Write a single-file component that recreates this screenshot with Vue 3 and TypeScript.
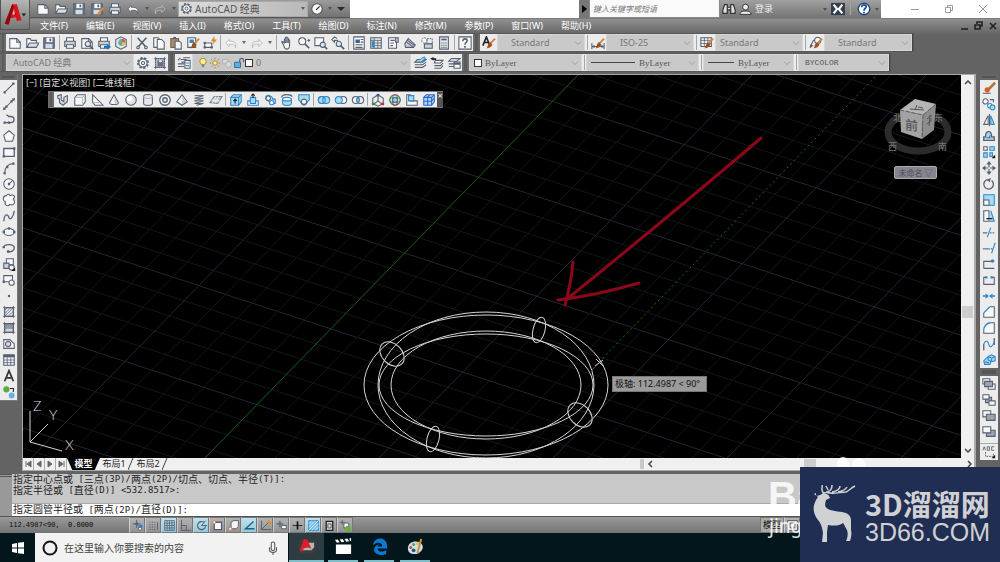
<script setup lang="ts">
type Shape = { d: string; fill: string; stroke: string; w: number; dash?: string }
type Item =
  | { kind: 'icon'; icon: string; label: string }
  | { kind: 'sep' | 'caret' | 'grip' }
  | { kind: 'combo'; label: string; text: string; size: string; prefix?: string }

const ink = '#566070'
const blue = '#2f86c9'
const pale = '#a8daf3'
const paper = '#f7f8fa'
const orange = '#df8a2b'
const grey = '#b4b8bf'

const s = (d: string, stroke = ink, fill = 'none', w = 1.2, dash?: string): Shape => ({ d, fill, stroke, w, dash })
const f = (d: string, fill = ink): Shape => ({ d, fill, stroke: 'none', w: 0 })
const circ = (x: number, y: number, r: number) => `M${x - r} ${y}a${r} ${r} 0 1 0 ${2 * r} 0a${r} ${r} 0 1 0 ${-2 * r} 0z`
const oval = (x: number, y: number, a: number, b: number) => `M${x - a} ${y}a${a} ${b} 0 1 0 ${2 * a} 0a${a} ${b} 0 1 0 ${-2 * a} 0z`
const box = (x: number, y: number, w: number, h: number) => `M${x} ${y}h${w}v${h}h${-w}z`
const dots = (pts: number[][], color = ink) => pts.map(([x, y]) => f(box(x - 1.3, y - 1.3, 2.6, 2.6), color))
const brush = [s('M15 3 9 9', '#c98b46', 'none', 2.4), f('M9 7l3 3c-2 3-4 4-7 4 2-1 1-5 4-7z', '#9c4f1f')]
const printer = [s('M4 6V2h8v4', ink, paper), s('M2 6h12v6H2z', ink, '#c9ced6'), s('M4 10h8v4H4z', ink, paper)]
const floppy = [s('M2 2h12v12H2z', ink, '#66758d'), f(box(5, 2, 7, 5), paper), f(box(4, 9, 8, 5), '#d5dae1'), f(box(8.5, 3, 2, 3))]
const page = [s('M2 3h8l4 4v7H2z', ink, paper), s('M10 3v4h4')]
const folder = [s('M2 13V3h4l1 2h6v3', ink, paper), s('M2 13l3-5h11l-3 5z', ink, '#d8dde4')]
const gear = [s(circ(8, 8, 5.5), ink, 'none', 2.5, '2.5 1.8'), s(circ(8, 8, 4.7), ink, paper), s(circ(8, 8, 1.8))]
const sheets = [s('M5 4l10 0-4 3H2z', ink, pale), s('M2 10h9l4-3', ink), s('M2 13h9l4-3', ink)]

const icons: Record<string, Shape[]> = {
  new: page,
  open: folder,
  save: floppy,
  saveas: [...floppy, s('M15 7l-6 7', orange, 'none', 2.4)],
  print: printer,
  preview: [...page, s(circ(9, 9, 3), ink, '#dbe8f2'), s('M11 11l4 4', ink, 'none', 2)],
  publish: [...printer, f('M8 11h4V9l4 3.500-4 3.500v-2H8z', '#1776c4')],
  globe: [s('M8 1l6 3v8l-6 3-6-3V4z', ink, '#dce9f5'), f(circ(9, 7, 4), '#6aa7dd'), f('M9 3a4 4 0 0 1 4 4H9z', '#e05a45'), f('M9 7h4a4 4 0 0 1-4 4z', '#edc13f'), f('M9 7v4a4 4 0 0 1-4-4z', '#6db258')],
  cut: [s('M3 2l9 10M13 2L4 12', ink, 'none', 1.8), s(circ(3.5, 13, 1.5)), s(circ(12.5, 13, 1.5))],
  copy: [s('M2 2h5l3 3v8H2z', ink, paper), s('M6 4h5l3 3v8H6z', ink, paper)],
  paste: [s('M2 3h9v10H2z', '#7b654f', '#a9896b'), s('M7 6h5l2 2v7H7z', ink, paper), s('M5 2h3', ink, 'none', 2)],
  match: [s(box(2, 2, 9, 11), ink, paper), f(box(4, 4, 5, 4), blue), ...brush],
  block: [s('M2 8h8v5H2z', ink, paper), ...dots([[2, 13], [10, 13], [2, 8]]), f('M13 0l-4 6h3l-1 4 5-6h-3z', orange)],
  undo: [s('M6 4L2 8l4 4V9.500h4c2 0 3 1 3 4 2-6-1-7.500-7-7.500z', ink, paper, 1)],
  undoDim: [s('M6 4L2 8l4 4V9.500h4c2 0 3 1 3 4 2-6-1-7.500-7-7.500z', grey, paper, 1)],
  redoDim: [s('M10 4l4 4-4 4V9.500H6c-2 0-3 1-3 4-2-6 1-7.500 7-7.500z', grey, 'none', 1)],
  pan: [s('M4 10L2 7c0-1 1-1 3 1V4c0-1 1.500-1 1.500 0V2c0-1 1.500-1 1.500 0v1c0-1 1.500-1 1.500 0v2c0-1 1.500-1 1.500 0v5c0 3-1 5-3.500 5S5 13 4 10z', ink, paper), s('M6.500 4v4M8 3v5M9.500 4v4')],
  zoomrt: [s(circ(6, 6, 4), ink, paper), s('M9 9l5 5', ink, 'none', 2), s('M12 5h3M13.500 3.500v3')],
  zoomwin: [s(box(1, 2, 10, 9), ink, paper), s(circ(10, 10, 3), ink, '#dbe8f2'), s('M12 12l3 3', ink, 'none', 2)],
  zoomprev: [s('M7 3L4 1 1 4l3 3V5h4', ink, paper), s(circ(9, 9, 3), ink, '#dbe8f2'), s('M11 11l4 4', ink, 'none', 2)],
  props: [s(box(2, 1, 12, 14), ink, paper), f(box(4, 4, 5, 4), '#2e67a8'), s('M10 4h3M10 7h3M4 10h8M4 13h8')],
  center: [s(box(2, 2, 12, 12), ink, '#e7ebf0'), s('M2 5h12M6 2v12M10 5v9M6 8h8M6 11h8', ink, 'none', 0.9), f(box(3, 6, 3, 7), blue)],
  palette: [s(box(3, 2, 9, 12), ink, paper), s('M5 5h5M5 8h4M5 11h3'), s(box(11, 2, 3, 5), ink, '#ccd2da')],
  sheetset: [s('M2 9l4-6 8 7-2 3-9 0z', ink, '#cdd2d9'), s('M4 7l8 6M5 5l8 6')],
  markup: [s(circ(5, 5, 3), ink, paper, 1, '2 1'), s('M8 3h6v6H8z', ink, 'none', 1, '2 1'), s(box(5, 9, 9, 5), ink, '#ccd2da')],
  calc: [s(box(3, 1, 10, 14), ink, '#e6e8ec'), f(box(5, 3, 6, 2)), s('M5 8h6M5 10.500h6M5 13h6', ink, 'none', 1.2, '1.300 1')],
  help: [s(box(1, 1, 14, 14), ink, paper), s('M5.500 6c0-4 5-3 5-.500C10.500 7 8 7.500 8 10', ink, 'none', 1.8), f(box(7, 11.500, 2, 2))],
  textstyle: [s('M1 11L5 1l4 10M2.500 7.500h5', '#222', 'none', 1.8), ...brush],
  dimstyle: [s('M1 8v7M15 8v7M1 12h14'), f('M1 12l3-2v4z'), f('M15 12l-3-2v4z'), ...brush],
  tablestyle: [s(box(1, 2, 12, 10), ink, paper), s('M1 5h12M5 2v10M9 2v10M1 8.500h12', ink, 'none', 0.9), ...brush],
  mleader: [s('M1 13L5 5h3', ink), f('M1 14l1-5 3 2z'), s(circ(10, 5, 3.5), ink, paper), ...brush],
  gear,
  wssave: [s(box(3, 3, 10, 10), ink, '#c5cdd8', 1.2, '1.500 1'), f(box(5, 5, 7, 7), '#64707f'), f(box(7, 5, 3, 2), paper), s('M1 3h14M3 1v14M13 1v14M1 13h14', ink, 'none', 0.9)],
  layerprop: [s('M7 2h8M4 4h7M5 7h5M1 9h8M1 12h7M4 2L1 5'), s(box(9, 5, 6, 9), ink, paper), s('M10 8h4M10 11h4', blue)],
  bulb: [s(circ(8, 6, 4.3), '#a8862b', '#ffec91'), s('M6 11h4M6.500 13h3', '#73736e', 'none', 1.5)],
  sun: [s(circ(8, 8, 3), '#a88625', '#ffec91'), s('M8 1v2M8 13v2M1 8h2M13 8h2M3 3l1.500 1.500M13 3l-1.500 1.500M3 13l1.500-1.500M13 13l-1.500-1.500', '#a88625')],
  freeze: [s(box(2, 3, 7, 6), '#adadad', '#d8d8d8'), s(circ(10, 10, 4), '#adadad', '#d8d8d8')],
  lock: [s(box(2, 7, 8, 7), '#276a9e', '#56b3e6'), s('M9 7V4c0-3 5-3 5 0v3', ink, 'none', 1.6)],
  layermake: [...sheets, s('M9 3l4-2 1 2-6 5', blue, pale)],
  layerprev: [s('M6 5h9l-3 3H5z', ink, paper), s('M5 11h7l3-3'), s('M5 14h7l3-3'), f('M0 3l4-2v1.500h3v2H4V5z', '#222')],
  layerstate: [s('M5 3h10l-4 3H2z', ink, paper), s('M2 9h7M2 12h6'), s(box(8, 7, 7, 7), ink, paper), s('M8 9h7', ink, 'none', 2)],
  line: [s('M3 13L13 3'), ...dots([[3, 13], [13, 3]])],
  xline: [s('M2 14L14 2'), ...dots([[5, 11], [11, 5]]), f('M15 1l-1 4-3-3z'), f('M1 15l1-4 3 3z')],
  pline: [s('M7 4h3c5 0 5 7 0 7H3M5 2l3 2', ink, 'none', 1.5), ...dots([[3, 11], [8, 11]])],
  polygon: [s('M8 2l6 5-2 7H4L2 7z', ink, paper)],
  rect: [s(box(2, 4, 12, 9), ink, paper, 1.5), ...dots([[2, 13], [14, 4]])],
  arc: [s('M3 14C3 7 7 3 13 3'), ...dots([[3, 14], [6, 7], [13, 3]])],
  circle: [s(circ(8, 8, 6), ink, paper), s('M8 8l4-4'), ...dots([[8, 8]])],
  cloud: [s('M5 3c2-3 4-1 4 0 4-2 7 1 4 4 3 4 0 8-4 6-2 3-7 1-5-3-4-1-3-7 1-7z', ink, paper)],
  spline: [s('M2 14C3 3 7 7 8 10s5 0 6-8', ink, 'none', 1.5)],
  ellipse: [s(oval(8, 8, 6, 4), ink, paper), ...dots([[2, 8], [14, 8], [8, 4]])],
  earc: [s('M2 7c1-4 12-4 12 1 0 3-4 5-7 4', ink, 'none', 1.5), ...dots([[2, 7], [7, 12]])],
  insert: [s(box(5, 2, 8, 7), ink, paper), s('M2 7h6v6H2z', ink, '#ccd2da'), s(circ(11, 12, 3), ink, paper), f('M15 12v4h-4z', '#111')],
  mkblock: [s(box(2, 3, 10, 7), ink, paper), s(circ(11, 11, 3), ink, paper), ...dots([[2, 10]])],
  point: [f(circ(8, 8, 1.4))],
  hatch: [s(box(3, 3, 10, 10), ink, '#dcdfe3'), s('M3 6l3-3M3 10l7-7M3 13L13 3M7 13l6-6M11 13l2-2', ink, 'none', 0.7), s('M1 3h14M3 1v14M13 1v14M1 13h14', ink, 'none', 0.9)],
  gradient: [s(box(3, 3, 10, 10), ink, '#8f97a2'), f(box(4, 9, 8, 3), '#d2d6dc'), s('M1 3h14M3 1v14M13 1v14M1 13h14', ink, 'none', 0.9)],
  region: [s('M2 3h7l5 5v5H2z', ink, paper), s(circ(7, 8, 3), ink, '#d8dce2')],
  table: [s(box(2, 2, 12, 12), ink, paper), f(box(2, 2, 12, 3)), s('M2 8h12M2 11h12M6 5v9M10 5v9', ink, 'none', 0.9)],
  mtext: [s('M3 14L8 2l5 12M5 10h6', '#333', 'none', 2)],
  addsel: [f(circ(5, 5, 3.5), '#5fa843'), f(circ(11, 12, 3.3), '#62b1e6'), s('M9 4h4v4', '#222')],
  erase: [s('M15 2L7 10', '#a97a42', 'none', 3), f(circ(6, 10, 3), '#dd5b22'), s('M1 14h9')],
  mcopy: [s(circ(4, 5, 3), ink, paper), s(circ(9, 10, 2.6), blue, paper), s(circ(12, 12, 2.8), blue, pale), s('M9 3h4v3')],
  mirror: [s('M7 3v10H2z', ink, paper), s('M10 3v10h4z', blue, pale), s('M8.500 1v14')],
  offset: [s('M2 13h12V9h-3c0-8-7-8-7 0H2z', ink, pale, 1.5), s('M5 10h4V7', ink)],
  array: [s(box(2, 2, 4, 4), ink, paper), s(box(9, 2, 5, 4), blue, pale), s(box(2, 9, 4, 5), blue, pale), s(box(9, 9, 3, 4), blue, pale), f('M15 11v4h-4z', '#111')],
  move: [s('M8 2v12M2 8h12', ink, 'none', 1.4), f('M8 0l3 4H5z'), f('M8 16l3-4H5z'), f('M0 8l4-3v6z'), f('M16 8l-4-3v6z'), f(box(7, 7, 2, 2), paper)],
  rotate: [s('M6 3a5.500 5.500 0 1 0 5 1', ink, 'none', 1.5), f('M10 1L5 3l4 3z')],
  scale: [s(box(2, 2, 12, 12), blue, pale), s(box(2, 8, 6, 6), ink, paper)],
  stretch: [s('M2 2h6v12H2z', ink, paper), s('M10 2l4 12H8', blue, pale), s('M5 11h7', '#222', 'none', 1.5)],
  trim: [s('M1 9h5', ink, 'none', 1.3), s('M9 9h6', blue, 'none', 1.3, '2 1'), s('M10 3L6 14', blue)],
  extend: [s('M1 9h6', ink), s('M7 9h5', blue, 'none', 1.3, '2 1'), s('M15 2l-4 12', blue)],
  breakpt: [s('M2 13V5h12M2 13h12'), f(circ(12, 4.5, 2), blue)],
  breakg: [s('M5 5H2v8h12V5h-3'), ...dots([[5, 5], [11, 5]], blue)],
  join: [s('M1 8h5M10 8h5', blue, 'none', 1.5), f('M8 8L4 5v6z', blue), f('M8 8l4-3v6z', blue)],
  chamfer: [s('M2 9v5h12V2H9', ink, paper), s('M2 9l7-7', blue, 'none', 1.5)],
  fillet: [s('M2 10v4h12V2h-4', ink, paper), s('M2 10c0-4 4-8 8-8', blue, 'none', 1.5)],
  blend: [s('M2 15V8M14 1v8', ink, 'none', 1.5), s('M2 8C5 2 7 5 8 9s4 2 6-3', blue, 'none', 1.3)],
  explode: [s('M2 9l4-4 5 2-2 6H3z', blue, pale), s('M7 4l4-2 4 2v5l-4 1-4-2z', blue, pale), s('M7 4l4 2 4-2M11 6v4M3 10l5 1', blue)],
  front: [s(box(1, 2, 8, 6), ink, paper), s(box(7, 8, 8, 6), ink, paper), s(box(3, 5, 9, 6), ink, '#9ba3af')],
  back: [s(box(4, 5, 7, 6), ink, '#9ba3af'), s(box(1, 2, 7, 5), ink, paper), s(box(8, 9, 7, 5), ink, paper)],
  above: [s(box(1, 2, 9, 7), ink, paper), s(box(5, 6, 10, 7), ink, '#9ba3af')],
  under: [s(box(5, 6, 10, 7), ink, '#9ba3af'), s(box(1, 2, 9, 7), ink, paper)],
  abc: [s('M1 6l1.500-4L4 6M6 2v4h2.500V2zM14 2h-3v4h3', ink, 'none', 1), s('M4 8v5h9V9', ink, 'none', 1, '2 1'), f('M15 11v4h-4z', '#111')],
  polysolid: [s('M2 3l4-1v6l3 2V5l4-2v7l-5 4-4-3V7L2 6z', ink, '#d4d9e0')],
  box: [s('M2 5l3-3h9v8l-3 4H2z', ink, paper), s('M2 5h9v9M11 5l3-3', grey)],
  wedge: [s('M3 2v9l3 3h9z', ink, paper), s('M3 11h8', grey)],
  cone: [s('M8 2l5 9c0 3-10 3-10 0z', ink, paper), f('M8 3l4 8-3 2z', '#c9ced6')],
  sphere: [s(circ(8, 8, 6), ink, '#dfe3e8'), f(circ(6.5, 6.5, 3), '#fff')],
  cylinder: [s('M3 4v8c0 3 10 3 10 0V4c0-3-10-3-10 0z', ink, '#e4e7eb'), s('M3 4c0 3 10 3 10 0', grey)],
  torus: [s(circ(8, 8, 6), ink, paper, 1.5), s(circ(8, 8, 2.6), ink, '#ececec', 1.5)],
  pyramid: [s('M8 2l6 8-6 4-6-4z', ink, paper), f('M8 3l5 7-5 3z', '#cdd2d9')],
  helix: [s('M3 3h10L3 6h10L3 9h10L3 12h10l-8 2', ink, 'none', 1.1)],
  planar: [s('M1 11l5-7h9l-5 8z', '#7b8491', '#bcc2ca'), s('M3 8l9 1M8 4l-4 7M11 4l-4 7', '#eee')],
  extrude: [s('M2 5l3-3h9v8l-3 4H2z', blue, pale), s('M2 5h9v9M11 5l3-3', blue), s('M7 12V7M5 9l2-2 2 2', '#1c3048', 'none', 1.5)],
  presspull: [s('M2 14V9h12v5z', blue, paper), s('M5 5h6v7H5z', blue, pale), s('M8 6V1M6 3l2-2 2 2', '#222')],
  sweep: [s('M3 6c0-6 8-3 8 1h3v5H8c0-4-5-2-5-6z', blue, pale), s(circ(6, 6, 2.5), ink, paper), s(circ(10, 11, 2.5), blue, paper)],
  revolve: [s('M3 7v5c0 3 10 3 10 0V7z', blue, pale), s('M2 5c0-4 10-4 12-1', ink, 'none', 1.4), s(oval(8, 7, 5, 2), blue, paper)],
  loft: [s('M2 2h12v6c-3 1-2 6-6 6S5 9 2 8z', blue, pale), s(circ(8, 10, 3), ink, paper)],
  union: [s(circ(5.5, 8, 4), blue, pale), s(circ(10.5, 8, 4), blue, pale), s(circ(5.5, 8, 4), blue)],
  subtract: [s(circ(10.5, 8, 4), ink, paper), s(circ(5.5, 8, 4), blue, pale)],
  intersect: [s(circ(5.5, 8, 4), ink, paper), s(circ(10.5, 8, 4), ink, 'none'), s('M8 5c2 2 2 4 0 6-2-2-2-4 0-6z', blue, pale)],
  move3d: [s('M8 2v7M8 9l-5 4M8 9l5 4', ink, 'none', 1.3), s('M8 2L2 6v6l6 3 6-3V6z', ink), f(box(6.5, 1, 3, 3), '#335c9c'), f(box(1, 11, 3, 3), '#338c38'), f(box(12, 11, 3, 3), '#b93434')],
  rotate3d: [s(circ(8, 8, 6), ink, paper), s(oval(8, 8, 3, 6), '#c0392b'), s(oval(8, 8, 6, 3), '#3c9a4b'), s(circ(8, 8, 2.5), blue, pale)],
  align3d: [s('M2 2v12h12V9H6V2z', ink, paper), s(box(4, 3, 6, 6), blue, pale)],
  array3d: [s('M2 5l3-3h9v8l-3 4H2z', '#2f63c9', pale), s('M2 5h9v9M11 5l3-3M6.500 5v9M2 9.500h9M6 5l3-3M11 9l3-3', '#2f63c9')],
  infer: [s('M7 1v10M2 6h10'), f(box(9, 7, 5, 5), blue), s(circ(11, 12, 2), ink, paper), f(circ(7, 6, 2))],
  snap: [s('M3 4h9M3 7h9M3 10h9M3 13h9', ink, 'none', 1.3, '1.300 1.700'), s('M13 4v9')],
  grid: [s('M2 2h12v12H2zM5 2v12M8 2v12M11 2v12M2 5h12M2 8h12M2 11h12', ink, 'none', 1)],
  ortho: [s('M3 1v13h12M3 8h6v6', ink, 'none', 1.2)],
  polar: [s('M13 9a5 5 0 1 1-2-5', ink, 'none', 1.4), s('M8 8h7M8 8l5-6')],
  osnap: [s(box(4, 4, 9, 9), ink, paper, 1.6), s(circ(4, 4, 1.8), '#d97841', '#fff')],
  osnap3: [s('M5 4l3-2h6v7l-3 3H5z', ink, paper), s(circ(4, 12, 2), '#d97841', '#fff')],
  otrack: [s('M13 3L3 12h11', '#245b78', 'none', 1.6)],
  ducs: [s('M3 2v11h12M3 13L12 4'), f('M13 0l-4 5h3v4l4-5h-3z', orange)],
  dyn: [s('M6 2v8M2 6h8', ink, 'none', 1.5), s(box(8, 8, 6, 4), ink, paper)],
  lwt: [s('M2 8h12', '#111', 'none', 1), s('M8 3v10', '#111', 'none', 2)],
  tpy: [s(box(2, 2, 12, 12), '#4a84bf', '#78bce8'), s('M2 6l4-4M2 10l8-8M2 14L14 2M6 14l8-8M10 14l4-4', '#eaf6ff', 'none', 1)],
  qp: [s(box(4, 3, 8, 11), '#222', '#ddd', 1.6), s('M6 6h4v5H6z')],
  cycle: [s('M4 1v6M1 4h6'), s(box(6, 5, 6, 6), ink, paper), f(circ(11, 12, 3.8), '#6dad3e')],
  binoc: [s('M3 3h3v10H1V9zM13 3h-3v10h5V9zM6 6h4v3H6z', '#333', '#e4e4e4', 1.4)],
  user: [s(circ(8, 5, 3.6), '#333', '#eee'), s('M1 14c1-4 4-4 7-4s6 0 7 4z', '#333', '#eee')],
  exchange: [f(box(0, 1, 16, 14), '#333f50'), s('M3 3l4 5-4 5M13 3L9 8l4 5', '#fff', 'none', 2.4)],
  info: [s(circ(8, 8, 6.6), '#234e86', '#fff', 1.6), s('M5.500 6c0-4 5-3 5-.500C10.500 7 8 7.500 8 10', '#205397', 'none', 2), f(box(7, 11, 2, 2), '#205397')],
  gauge: [s(circ(8, 8, 6), '#555', '#fafafa', 1.3), s('M7 9l4-4', '#333', 'none', 1.6)],
}

const list = (spec: string): Item[] =>
  spec.split(' ').map((k): Item => {
    if (k === '|') return { kind: 'sep' }
    if (k === 'v') return { kind: 'caret' }
    if (k === '#') return { kind: 'grip' }
    return { kind: 'icon', icon: k, label: k }
  })
const combo = (label: string, text: string, size: string, prefix?: string): Item => ({ kind: 'combo', label, text, size, prefix })

const quick = list('new open save saveas print undo v redoDim v')
const standardBar: Item[] = [
  ...list('# new open save | print preview publish globe | cut copy paste match block | undoDim v redoDim v | pan zoomrt zoomwin zoomprev | props center palette sheetset markup calc | help # textstyle'),
  combo('文字样式', 'Standard', 'mid indent'), ...list('| dimstyle'),
  combo('标注样式', 'ISO-25', 'mid indent'), ...list('| tablestyle'),
  combo('表格样式', 'Standard', 'mid'), ...list('| mleader'),
  combo('多重引线样式', 'Standard', 'mid indent'),
]
const layerBar: Item[] = [
  ...list('#'), combo('工作空间', 'AutoCAD 经典', 'workspace'), ...list('gear wssave # layerprop'),
  combo('图层', '0', 'layer', 'layer'), ...list('layermake layerprev layerstate #'),
  combo('颜色', 'ByLayer', 'color serif', 'swatch'), ...list('|'),
  combo('线型', 'ByLayer', 'color serif', 'line'), ...list('|'),
  combo('线宽', 'ByLayer', 'weight serif', 'short'), ...list('|'),
  combo('打印样式', 'BYCOLOR', 'weight mono'),
]
const drawBar = 'line xline pline polygon rect arc circle cloud spline ellipse earc insert mkblock point hatch gradient region table mtext addsel'.split(' ')
const modifyBar = 'erase mcopy mirror offset array move rotate scale stretch trim extend breakpt breakg join chamfer fillet blend explode'.split(' ')
const orderBar = 'front back above under'.split(' ')
const modelBar = list('polysolid box wedge cone sphere cylinder torus pyramid helix planar | extrude presspull sweep revolve loft | union subtract intersect | move3d rotate3d align3d array3d')
const menus = ['文件(F)', '编辑(E)', '视图(V)', '插入(I)', '格式(O)', '工具(T)', '绘图(D)', '标注(N)', '修改(M)', '参数(P)', '窗口(W)', '帮助(H)']
const status = 'infer snap grid ortho polar osnap osnap3 otrack ducs dyn lwt tpy qp cycle'.split(' ')
const active = new Set(['grid', 'polar', 'otrack', 'tpy'])

const split = (t: string) => (t.match(/[\x20-\x7e]+|[^\x20-\x7e]+/g) ?? []).map((v) => ({ v, latin: v.charCodeAt(0) < 127 }))
const history = ['指定中心点或 [三点(3P)/两点(2P)/切点、切点、半径(T)]:', '指定半径或 [直径(D)] <532.8517>:'].map(split)
const prompt = split('指定圆管半径或 [两点(2P)/直径(D)]:')

const gridA = Array.from({ length: 44 }, (_, i) => i - 22).map((i) => ({ major: i % 5 === 0, d: `M23 ${128 + i * 20}L963 ${128 + i * 20 + 308}` }))
const gridB = Array.from({ length: 42 }, (_, i) => i - 15).map((i) => {
  const x = Math.round(578 + i * 34.8)
  return { major: i % 5 === 0, axis: i === 0, d: `M${x} 75L${x - 374} 459` }
})
</script>

<template>
  <div class="app">
    <header class="header">
      <button class="logo" aria-label="应用程序菜单">
        <svg viewBox="0 0 30 29">
          <path d="M4 24 12 3h5l5 17-5 1-1-4-6 1-1 6z" fill="#d8131c" />
          <path d="M4 24 12 3l2 2-6 20zM12 14l2-5 2 5z" fill="#8d0910" />
          <path d="M12 14l2-6 1 6z" fill="#f4b9b6" />
          <path d="M22 13h5l-2.500 3z" fill="#222" />
        </svg>
      </button>
      <div class="header-rows">
        <div class="title">
          <div class="quick">
            <template v-for="(t, i) in quick" :key="i">
              <button v-if="t.kind === 'icon'" class="tool wide" :aria-label="t.label">
                <svg viewBox="0 0 16 16"><path v-for="(p, j) in icons[t.icon]" :key="j" :d="p.d" :fill="p.fill" :stroke="p.stroke" :stroke-width="p.w" :stroke-dasharray="p.dash" /></svg>
              </button>
              <span v-else class="caret"></span>
            </template>
            <div class="space-select">
              <svg class="ico" viewBox="0 0 16 16"><path v-for="(p, j) in gear" :key="j" :d="p.d" :fill="p.fill" :stroke="p.stroke" :stroke-width="p.w" :stroke-dasharray="p.dash" /></svg>
              <select aria-label="工作空间切换"><option>AutoCAD 经典</option></select>
              <span class="caret"></span>
            </div>
            <button class="tool" aria-label="导航">
              <svg viewBox="0 0 16 16"><path v-for="(p, j) in icons.gauge" :key="j" :d="p.d" :fill="p.fill" :stroke="p.stroke" :stroke-width="p.w" /></svg>
            </button>
            <span class="caret"></span>
            <span class="caret strong"></span>
          </div>
          <div class="blank"></div>
          <button class="search-toggle" aria-label="展开搜索"><svg viewBox="0 0 10 10"><path d="M3 1v8l5-4z" /></svg></button>
          <input class="search" type="text" aria-label="搜索" placeholder="键入关键字或短语" />
          <div class="account">
            <button class="tool" aria-label="搜索"><svg viewBox="0 0 16 16"><path v-for="(p, j) in icons.binoc" :key="j" :d="p.d" :fill="p.fill" :stroke="p.stroke" :stroke-width="p.w" /></svg></button>
            <button class="login"><svg class="ico" viewBox="0 0 16 16"><path v-for="(p, j) in icons.user" :key="j" :d="p.d" :fill="p.fill" :stroke="p.stroke" :stroke-width="p.w" /></svg>登录</button>
            <span class="caret"></span>
            <button class="tool" aria-label="Exchange"><svg viewBox="0 0 16 16"><path v-for="(p, j) in icons.exchange" :key="j" :d="p.d" :fill="p.fill" :stroke="p.stroke" :stroke-width="p.w" /></svg></button>
            <span class="sep"></span>
            <button class="tool" aria-label="帮助"><svg viewBox="0 0 16 16"><path v-for="(p, j) in icons.info" :key="j" :d="p.d" :fill="p.fill" :stroke="p.stroke" :stroke-width="p.w" /></svg></button>
            <span class="caret"></span>
          </div>
          <div class="window-buttons">
            <button aria-label="最小化"><svg viewBox="0 0 10 10"><path d="M1 5.500h8" /></svg></button>
            <button aria-label="还原"><svg viewBox="0 0 10 10"><path d="M1.500 3.500h5v5h-5zM3.500 3.500v-2h5v5h-2" /></svg></button>
            <button aria-label="关闭"><svg viewBox="0 0 10 10"><path d="M1 1l8 8M9 1L1 9" /></svg></button>
          </div>
        </div>
        <nav class="menu">
          <button v-for="m in menus" :key="m">{{ m }}</button>
          <span class="grow"></span>
          <button class="doc" aria-label="最小化图形"><svg viewBox="0 0 10 10"><path d="M1 8h7" /></svg></button>
          <button class="doc" aria-label="还原图形"><svg viewBox="0 0 10 10"><path d="M1 4h5v4H1zM3 3V1h5v4H6" /></svg></button>
          <button class="doc" aria-label="关闭图形"><svg viewBox="0 0 10 10"><path d="M2 2l6 6M8 2L2 8" /></svg></button>
        </nav>
      </div>
    </header>

    <div v-for="(bar, b) in [standardBar, layerBar]" :key="b" class="bar">
      <template v-for="(t, i) in bar" :key="i">
        <button v-if="t.kind === 'icon'" class="tool" :aria-label="t.label">
          <svg viewBox="0 0 16 16"><path v-for="(p, j) in icons[t.icon]" :key="j" :d="p.d" :fill="p.fill" :stroke="p.stroke" :stroke-width="p.w" :stroke-dasharray="p.dash" /></svg>
        </button>
        <div v-else-if="t.kind === 'combo'" class="combo" :class="t.size">
          <template v-if="t.prefix === 'layer'">
            <svg v-for="n in ['bulb', 'sun', 'freeze', 'lock']" :key="n" class="mini" viewBox="0 0 16 16"><path v-for="(p, j) in icons[n]" :key="j" :d="p.d" :fill="p.fill" :stroke="p.stroke" :stroke-width="p.w" /></svg>
          </template>
          <span v-if="t.prefix === 'layer' || t.prefix === 'swatch'" class="swatch"></span>
          <span v-else-if="t.prefix" class="stroke" :class="t.prefix"></span>
          <select :aria-label="t.label"><option>{{ t.text }}</option></select>
          <svg class="chev" viewBox="0 0 8 8"><path d="M1 2.500l3 3 3-3" /></svg>
        </div>
        <span v-else :class="t.kind"></span>
      </template>
    </div>

    <main class="work">
      <aside class="dock left">
        <span class="dock-grip"></span>
        <button v-for="n in drawBar" :key="n" class="tool" :aria-label="n">
          <svg viewBox="0 0 16 16"><path v-for="(p, j) in icons[n]" :key="j" :d="p.d" :fill="p.fill" :stroke="p.stroke" :stroke-width="p.w" :stroke-dasharray="p.dash" /></svg>
        </button>
      </aside>
      <section class="document">
        <div class="view-row">
          <div class="canvas">
            <svg class="drawing" viewBox="23 75 938 383" preserveAspectRatio="xMinYMin slice">
              <path v-for="(g, i) in gridA" :key="'a' + i" :d="g.d" :class="g.major ? 'major' : 'minor'" />
              <path v-for="(g, i) in gridB" :key="'b' + i" :d="g.d" :class="g.axis ? 'axis' : g.major ? 'major' : 'minor'" />
              <path d="M599 362 877 75" class="track" />
              <g class="wire">
                <ellipse cx="486" cy="385" rx="122" ry="70" />
                <ellipse cx="486" cy="385" rx="108" ry="73" />
                <ellipse cx="486" cy="385" rx="107" ry="51" />
                <ellipse cx="486" cy="385" rx="95" ry="54" />
                <ellipse cx="539" cy="330" rx="6" ry="13" transform="rotate(14 539 330)" />
                <ellipse cx="433" cy="439" rx="6" ry="13" transform="rotate(14 433 439)" />
                <ellipse cx="392" cy="354" rx="10" ry="14" transform="rotate(-45 392 354)" />
                <ellipse cx="580" cy="415" rx="10" ry="14" transform="rotate(-45 580 415)" />
                <path d="M596 359l7 7M603 360l-8 6" />
                <path d="M30 411v31l18-18M30 442l32 9" />
              </g>
              <path d="M591 371l5-5" stroke="#8a2b86" />
              <path class="arrow" d="M761 138Q660 224 567 299M573 262q-2 22-8 43M558 300q40-5 81-17" />
              <g class="ucs"><text x="33" y="411">Z</text><text x="49" y="420">Y</text><text x="65" y="450">X</text></g>
              <ellipse cx="918" cy="132" rx="30" ry="19" fill="none" stroke="#2c2c2c" stroke-width="7" />
              <g class="compass">
                <text x="888" y="150">西</text><text x="938" y="150">南</text><text x="893" y="121">北</text><text x="934" y="121">东</text>
              </g>
              <path d="M900 110l15-11 21 5-13 11z" fill="#b5b5b5" />
              <path d="M900 110l23 5-1 24-21-7z" fill="#a3a3a3" />
              <path d="M923 115l13-11-2 26-12 9z" fill="#8d8d8d" />
              <path d="M900 110l23 5 13-11M923 115l-1 24" fill="none" stroke="#5d5d5d" stroke-dasharray="4 2" />
              <g class="cube"><text x="905" y="130" font-size="13" transform="skewY(8) translate(0 -128)">前</text></g>
              <path d="M910 109l14 1M917 105l-2 5M918 107l5 1M927 119l5-4M930 115l-1 11M927 124l4-3v-3" fill="none" stroke="#555" />
            </svg>
            <div class="view-label">[−] [自定义视图] [二维线框]</div>
            <div class="floatbar">
              <span class="grip"></span>
              <template v-for="(t, i) in modelBar" :key="i">
                <button v-if="t.kind === 'icon'" class="tool" :aria-label="t.label">
                  <svg viewBox="0 0 16 16"><path v-for="(p, j) in icons[t.icon]" :key="j" :d="p.d" :fill="p.fill" :stroke="p.stroke" :stroke-width="p.w" /></svg>
                </button>
                <span v-else class="sep"></span>
              </template>
              <button class="float-close" aria-label="关闭工具栏">×</button>
            </div>
            <button class="ucs-name">未命名 ▽</button>
            <div class="tip">极轴: 112.4987 &lt; 90°</div>
          </div>
          <div class="vscroll">
            <svg viewBox="0 0 10 10"><path d="M2 7l3-3 3 3" /></svg>
            <span class="room upper"></span>
            <span class="thumb"></span>
            <span class="room lower"></span>
            <svg viewBox="0 0 10 10"><path d="M2 3l3 3 3-3" /></svg>
          </div>
        </div>
        <div class="tabs">
          <button v-for="n in ['M3 2v6M8 2v6L4 5z', 'M7 2v6L3 5z', 'M3 2v6l4-3z', 'M8 2v6M3 2v6l4-3z']" :key="n" class="nav" aria-label="切换布局"><svg viewBox="0 0 10 10"><path :d="n" /></svg></button>
          <button class="tab on">模型</button>
          <button class="tab">布局1</button>
          <svg class="slash" viewBox="0 0 6 12"><path d="M0 12L5 0" /></svg>
          <button class="tab">布局2</button>
          <svg class="slash" viewBox="0 0 6 12"><path d="M0 12L5 0" /></svg>
          <div class="hscroll">
            <span class="splitter"></span>
            <svg viewBox="0 0 10 10"><path d="M6 2L3 5l3 3" /></svg>
            <span class="thumb"></span>
            <svg viewBox="0 0 10 10"><path d="M4 2l3 3-3 3" /></svg>
          </div>
        </div>
      </section>
      <aside class="dock right">
        <span class="dock-grip"></span>
        <button v-for="n in modifyBar" :key="n" class="tool" :aria-label="n">
          <svg viewBox="0 0 16 16"><path v-for="(p, j) in icons[n]" :key="j" :d="p.d" :fill="p.fill" :stroke="p.stroke" :stroke-width="p.w" :stroke-dasharray="p.dash" /></svg>
        </button>
        <span class="dock-grip second"></span>
        <button v-for="n in orderBar" :key="n" class="tool" :aria-label="n">
          <svg viewBox="0 0 16 16"><path v-for="(p, j) in icons[n]" :key="j" :d="p.d" :fill="p.fill" :stroke="p.stroke" :stroke-width="p.w" /></svg>
        </button>
        <span class="dock-sep"></span>
        <button class="tool" aria-label="文字前置"><svg viewBox="0 0 16 16"><path v-for="(p, j) in icons.abc" :key="j" :d="p.d" :fill="p.fill" :stroke="p.stroke" :stroke-width="p.w" :stroke-dasharray="p.dash" /></svg></button>
      </aside>
    </main>

    <section class="command">
      <div class="cmd-grip"></div>
      <div class="cmd-body">
        <div class="history">
          <p v-for="(row, i) in history" :key="i"><span v-for="(p, j) in row" :key="j" :class="{ latin: p.latin }">{{ p.v }}</span></p>
        </div>
        <label class="prompt"><span v-for="(p, j) in prompt" :key="j" :class="{ latin: p.latin }">{{ p.v }}</span><input type="text" aria-label="命令行" /></label>
      </div>
    </section>

    <footer class="status">
      <span class="coords">112.4987&lt;90, &nbsp;0.0000</span>
      <button v-for="n in status" :key="n" class="toggle" :class="{ on: active.has(n) }" :aria-label="n">
        <svg viewBox="0 0 16 16"><path v-for="(p, j) in icons[n]" :key="j" :d="p.d" :fill="p.fill" :stroke="p.stroke" :stroke-width="p.w" :stroke-dasharray="p.dash" /></svg>
      </button>
      <span class="grow"></span>
      <button class="space">模型</button>
      <button class="toggle" aria-label="布局"><svg viewBox="0 0 16 16"><path d="M2 2h12v12H2zM5 5h6v6H5z" fill="#eee" stroke="#444" /></svg></button>
      <span class="tray"></span>
    </footer>

    <div class="taskbar">
      <button class="start" aria-label="开始"><svg viewBox="0 0 14 14"><path d="M1 3l5-1v4.500H1zM7 1.800l6-.800v5.500H7zM1 7.500h5V12l-5-1zM7 7.500h6V13l-6-.800z" fill="#fff" /></svg></button>
      <label class="find">
        <svg viewBox="0 0 16 16"><circle cx="8" cy="8" r="6.500" fill="none" stroke="#161616" stroke-width="2" /></svg>
        <input type="text" placeholder="在这里输入你要搜索的内容" />
        <svg viewBox="0 0 16 16"><path d="M6 3c0-2.500 4-2.500 4 0v6c0 2.500-4 2.500-4 0zM4 7v3c0 4 8 4 8 0V7M8 13v3" fill="none" stroke="#555" stroke-width="1.200" /></svg>
      </label>
      <button class="task current" aria-label="AutoCAD"><svg viewBox="0 0 20 20"><path d="M2 3h16v14H2z" fill="#3d3d3d" /><path d="M10 6h8v5l-3 3H4z" fill="#b5b5b5" /><path d="M3 15L7 2l4 1 4 9-4-1-4 1-1 3z" fill="#e01d2a" /></svg></button>
      <button class="task" aria-label="影片"><svg viewBox="0 0 20 20"><path d="M2 8h16v10H2zM1 3l3-.500 2 3-3 .500zM6 2.500l3-.500 2 3-3 .500zM11 2l3-.500 2 3-3 .500zM16 1.500l2-.500v3l-1 .500z" fill="#fff" /></svg></button>
      <button class="task" aria-label="Edge"><svg viewBox="0 0 20 20"><path d="M3 9c1-10 15-10 15 1v2H8c0 4 6 4 9 2v4C9 21 2 16 5 11c1-2 3-3 5-3-1 1-2 1-2 2h5c0-5-7-5-10-1z" fill="#0a7ad8" /></svg></button>
      <button class="task" aria-label="画图"><svg viewBox="0 0 20 20"><path d="M2 12C2 6 9 3 15 6c6 4 1 12-6 12-4 0-7-2-7-6z" fill="#c9e2ed" /><circle cx="5" cy="11" r="1.600" fill="#d84b3a" /><circle cx="8" cy="8" r="1.600" fill="#58a745" /><circle cx="12" cy="7" r="1.500" fill="#eabf37" /><circle cx="8" cy="14" r="2" fill="#37546a" /><path d="M16 2l-4 15" stroke="#d9913f" stroke-width="2.200" /></svg></button>
    </div>

    <div class="watermark">
      <svg viewBox="0 0 36 14"><ellipse cx="9" cy="9" rx="6" ry="8" /><ellipse cx="25" cy="10" rx="7" ry="8" /></svg>
      <strong>Bai</strong>
      <span>jing</span>
    </div>
    <div class="brand">
      <svg viewBox="0 0 44 60">
        <path d="M4 11c4-1 5-1 7-3 5 1 6 2 7 5l-4 2c-1 4-2 7 2 9 6 3 13 2 18 4 5 3 5 5 5 9v8c1 4 0 8-1 11h-4c2-4 2-8 1-11-2-3-3-6-4-7-4 3-9 3-15 2l-1 7v10h-5l1-9c-1-6-2-10-5-13-6-8-5-14-2-20l2-3-4-3 2-1z" fill="#d0d1d3" />
        <path d="M12 9C8 5 11 2 10 0M12 8c8-2 8-5 8-8M14 7c6 3 14 0 20 0 4-2 5-4 9-6M20 7c6-1 8-3 8-6M26 7c5-1 8-3 9-5M16 5l-2-4" fill="none" stroke="#d0d1d3" stroke-width="1.500" />
      </svg>
      <div class="brand-text"><strong>3D溜溜网</strong><span>3D66.COM</span></div>
    </div>
  </div>
</template>

<style>
html, body { margin: 0; background: #636363; }
</style>

<style scoped>
.app { position: relative; min-height: 100vh; display: flex; flex-direction: column; overflow: hidden; background: #636363; font: 9px/12px "Noto Sans", "Noto Sans CJK SC", sans-serif; color: #333; }
.app * { box-sizing: border-box; }
button, input, select { margin: 0; padding: 0; border: 0; border-radius: 0; background: transparent; color: inherit; font: inherit; outline: 0; }
select { appearance: none; min-width: 0; }
svg { display: block; flex: none; }
p { margin: 0; }
.grow { flex: 1; }

.header { display: flex; background: linear-gradient(#999 0, #686868 18px, #909090 19px, #666 100%); height: 34px; flex: none; }
.logo { width: 30px; height: 30px; flex: none; background: linear-gradient(#b5b5b5, #777); border: 1px solid #555; border-top: 0; }
.logo svg { width: 28px; height: 28px; }
.header-rows { flex: 1; min-width: 0; display: flex; flex-direction: column; }
.title { display: flex; height: 18px; background: #fff; }
.quick { display: flex; align-items: center; padding: 0 2px 0 4px; background: linear-gradient(#9b9b9b, #737373); border-bottom: 1px solid #555; }
.tool { width: 17px; height: 16px; flex: none; display: flex; align-items: center; justify-content: center; }
.tool svg { width: 14px; height: 14px; }
.quick .tool.wide { width: 18px; }
.caret { width: 9px; flex: none; height: 0; display: flex; justify-content: center; align-items: center; }
.caret::after { content: ""; border: 2px solid transparent; border-top: 3px solid #444; border-bottom: 0; }
.caret.strong { width: 14px; }
.caret.strong::after { border-width: 4px 4px 0; border-top-color: #111; }
.space-select { display: flex; align-items: center; width: 130px; height: 16px; background: linear-gradient(90deg, #ddd, #b8b8b8); border: 1px solid #aaa; }
.space-select select { flex: 1; font-size: 10px; color: #555; padding-left: 1px; }
.ico { width: 13px; height: 13px; margin: 0 1px; }
.blank { flex: 1; }
.search-toggle { width: 10px; background: #777; }
.search-toggle svg { width: 10px; height: 10px; }
.search { width: 131px; padding: 0 3px; font-size: 8px; font-style: italic; background: #fafafa; border: 1px solid #888; border-top: 0; }
.search::placeholder { color: #777; opacity: 1; }
.account { display: flex; align-items: center; width: 161px; background: linear-gradient(#a0a0a0, #747474); }
.login { display: flex; align-items: center; gap: 2px; color: #eee; margin-right: auto; padding-left: 1px; }
.account .sep { width: 9px; height: 14px; }
.window-buttons { width: 119px; display: flex; align-items: center; padding-left: 17px; }
.window-buttons button { width: 34px; display: flex; justify-content: center; }
.window-buttons svg, .doc svg { width: 10px; height: 10px; fill: none; stroke: #999; }
.menu { display: flex; flex: 1; align-items: center; padding-left: 10px; color: #fff; gap: 18px; }
.menu .doc { margin-left: -14px; }
.menu .doc:last-child { margin-right: 2px; }
.doc svg { stroke: #222; stroke-width: 1.600; }

.bar { display: flex; align-items: stretch; align-self: flex-start; height: 17px; background: #ececec; border-right: 1px solid #444; outline: 1px solid #575757; }
.bar + .bar { margin-top: 3px; }
.bar .tool { height: 17px; }
.bar .caret { align-self: center; }
.caret::after { opacity: .8; }
.grip { width: 7px; flex: none; background: #5b5b5b; border-left: 2px solid #6b6b6b; border-right: 2px solid #6b6b6b; }
.bar > .grip:first-child { width: 6px; }
.sep { width: 4px; flex: none; display: flex; justify-content: center; align-items: stretch; padding: 1px 0; }
.sep::after { content: ""; width: 1px; background: #a5a5a5; }
.combo { position: relative; display: flex; align-items: center; background: #c9c9c9; color: #777; padding-left: 4px; border: 1px solid #d6d6d6; }
.combo select { flex: 1; height: 15px; }
.combo.mid { width: 88px; }
.combo.indent { padding-left: 13px; }
.combo.workspace { width: 128px; padding-left: 6px; }
.combo.layer { width: 219px; }
.combo.color { width: 113px; }
.combo.weight { width: 91px; }
.combo.serif { font-family: "Liberation Serif", serif; color: #555; }
.combo.mono { font-family: "Liberation Mono", monospace; font-size: 8px; color: #555; padding-left: 6px; }
.chev { position: absolute; right: 2px; top: 4px; width: 8px; height: 8px; fill: none; stroke: #a0a0a0; pointer-events: none; }
.mini { width: 12px; height: 12px; }
.swatch { width: 8px; height: 8px; border: 1px solid #333; background: #fff; margin-right: 3px; flex: none; }
.stroke { height: 1px; background: #444; margin-right: 4px; flex: none; }
.stroke.line { width: 44px; }
.stroke.short { width: 26px; }

.work { display: flex; flex: 1; margin-top: 3px; min-height: 300px; }
.dock { width: 18px; flex: none; background: #ececec; align-self: flex-start; border: 1px solid #777; border-width: 0 1px 1px 0; }
.dock.right { margin-left: 4px; margin-right: 2px; height: 0; border: 0; }
.dock.right > * { background-color: #ececec; }
.dock-grip { display: block; height: 6px; background: #555; border: 2px solid #666; }
.dock.right .dock-grip { background: #555; }
.dock.right .second { height: 8px; }
.dock-sep { display: block; height: 4px; border-top: 1px solid #ececec; border-bottom: 1px solid #aaa; }
.dock .tool { width: 100%; }
.document { flex: 1; min-width: 0; margin-left: 4px; display: flex; flex-direction: column; border: 1px solid #aaa; border-right: 2px solid #aaa; }
.view-row { display: flex; flex: 1; }
.canvas { position: relative; flex: 1; background: #000; overflow: hidden; }
.drawing { position: absolute; inset: 0; width: 100%; height: 100%; }
.minor { stroke: #15151c; fill: none; }
.major { stroke: #252533; fill: none; }
.axis { stroke: #116016; fill: none; }
.track { stroke: #0d7a13; stroke-dasharray: 2 3; }
.wire { fill: none; stroke: #d5d5d5; }
.arrow { fill: none; stroke: #8b0719; stroke-width: 3; stroke-linecap: round; }
.ucs { fill: #ddd; font: 14px "Lato", sans-serif; font-weight: 300; }
.compass { fill: #777; font-size: 9px; }
.cube { fill: #555; font-weight: 500; }
.view-label { position: absolute; left: 3px; top: 2px; color: #ddd; }
.floatbar { position: absolute; left: 25px; top: 16px; height: 17px; display: flex; align-items: stretch; background: #ececec; border: 1px solid #777; border-width: 1px 0; }
.floatbar .grip { width: 6px; }
.floatbar .sep { width: 3px; }
.float-close { width: 6px; background: #555; color: #fff; line-height: 8px; padding-bottom: 7px; }
.ucs-name { position: absolute; right: 24px; top: 91px; width: 43px; height: 13px; border: 1px solid #aaa; border-radius: 2px; background: #85858f; color: #4b4b55; font-size: 8px; line-height: 10px; }
.tip { position: absolute; left: 589px; top: 301px; height: 16px; padding: 0 6px 0 2px; background: #9b9b9b; border: 1px solid #777; color: #111; line-height: 14px; white-space: nowrap; }
.vscroll { width: 13px; flex: none; display: flex; flex-direction: column; align-items: center; background: #f0f0f0; padding: 2px 0; }
.vscroll svg, .hscroll svg { width: 10px; height: 10px; fill: none; stroke: #444; stroke-width: 1.500; }
.vscroll .thumb { width: 11px; height: 12px; background: #cdcdcd; }
.upper { flex: 219; }
.lower { flex: 128; }
.tabs { display: flex; height: 12px; background: #f0f0f0; color: #222; }
.nav { width: 11px; border-right: 1px solid #aaa; }
.nav svg { width: 10px; height: 10px; fill: #666; stroke: #666; }
.tab { width: 28px; line-height: 12px; }
.tab.on { width: 33px; background: #000; color: #fff; clip-path: polygon(0 0, 100% 0, 84% 100%, 16% 100%); font-weight: 700; }
.slash { width: 6px; height: 12px; fill: none; stroke: #444; }
.hscroll { margin-left: auto; width: 334px; display: flex; align-items: center; }
.hscroll .splitter { width: 4px; height: 10px; background: #c8c8c8; margin-right: 2px; }
.hscroll .thumb { width: 12px; height: 10px; background: #cdcdcd; margin: 0 auto; }

.command { display: flex; margin-top: 3px; background: #999; font-size: 10px; color: #222; font-family: "Liberation Sans", "Noto Sans CJK SC", sans-serif; }
.cmd-grip { width: 12px; flex: none; border-top: 3px double #555; }
.cmd-body { flex: 1; display: flex; flex-direction: column; }
.history { height: 30px; background: #c8c8c8; padding-left: 1px; border-bottom: 1px solid #aaa; }
.history p { display: flex; align-items: center; line-height: 11px; height: 11px; white-space: pre; }
.latin { font: 9px/11px "DejaVu Sans Mono", "Liberation Mono", monospace; white-space: pre; }
.prompt { height: 12px; line-height: 12px; background: #fff; padding-left: 1px; display: flex; align-items: center; white-space: pre; }
.prompt input { flex: 1; min-width: 0; height: 12px; }
.status { display: flex; align-items: center; height: 17px; background: linear-gradient(#999, #747474); border-top: 1px solid #555; }
.coords { width: 129px; padding-left: 9px; font: 7px/12px "DejaVu Sans Mono", "Liberation Mono", monospace; color: #111; }
.toggle { width: 16px; height: 16px; flex: none; border: 1px solid #777; border-left-color: #ccc; background: linear-gradient(#b4b4b4, #929292); display: flex; align-items: center; justify-content: center; }
.toggle.on { background: linear-gradient(#bfe3ef, #8fc9dc); }
.toggle svg { width: 13px; height: 13px; }
.space { width: 24px; height: 16px; background: #aaa; border: 1px solid #777; color: #111; }
.tray { width: 200px; }
.taskbar { display: flex; height: 29px; background: #03161b; }
.start { width: 35px; display: flex; align-items: center; justify-content: center; }
.start svg { width: 14px; height: 14px; }
.find { width: 253px; background: #f2f2f2; display: flex; align-items: center; padding: 0 8px 0 7px; gap: 6px; }
.find svg { width: 16px; height: 16px; }
.find svg:last-child { width: 14px; height: 14px; }
.find input { flex: 1; min-width: 0; font-size: 10px; line-height: 14px; height: 20px; }
.find input::placeholder { color: #444; opacity: 1; }
.task { width: 30px; margin: 0 3px; display: flex; align-items: center; justify-content: center; border-bottom: 2px solid #7cbfc9; }
.task svg { width: 19px; height: 19px; }
.task.current { width: 35px; margin: 0 1px; background: #2e3c41; }

.watermark { position: absolute; right: 130px; bottom: 22px; width: 102px; height: 84px; color: #fff; opacity: .85; }
.watermark svg { width: 36px; height: 14px; fill: #fff; position: absolute; right: 0; top: 0; }
.watermark strong { position: absolute; left: 0; top: 20px; font: 700 40px/40px "Liberation Sans", sans-serif; }
.watermark span { position: absolute; left: 1px; top: 58px; font: 19px/24px "Noto Sans", sans-serif; }
.brand { position: absolute; right: 0; bottom: 0; width: 200px; height: 95px; background: #212e54; color: #d0d1d3; display: flex; align-items: center; padding-left: 12px; gap: 9px; }
.brand svg { width: 44px; height: 60px; }
.brand-text { display: flex; flex-direction: column; white-space: nowrap; }
.brand-text strong { font: 700 29px/34px "Noto Sans CJK SC", sans-serif; }
.brand-text span { font: 25px/24px "Liberation Sans", sans-serif; }
</style>
